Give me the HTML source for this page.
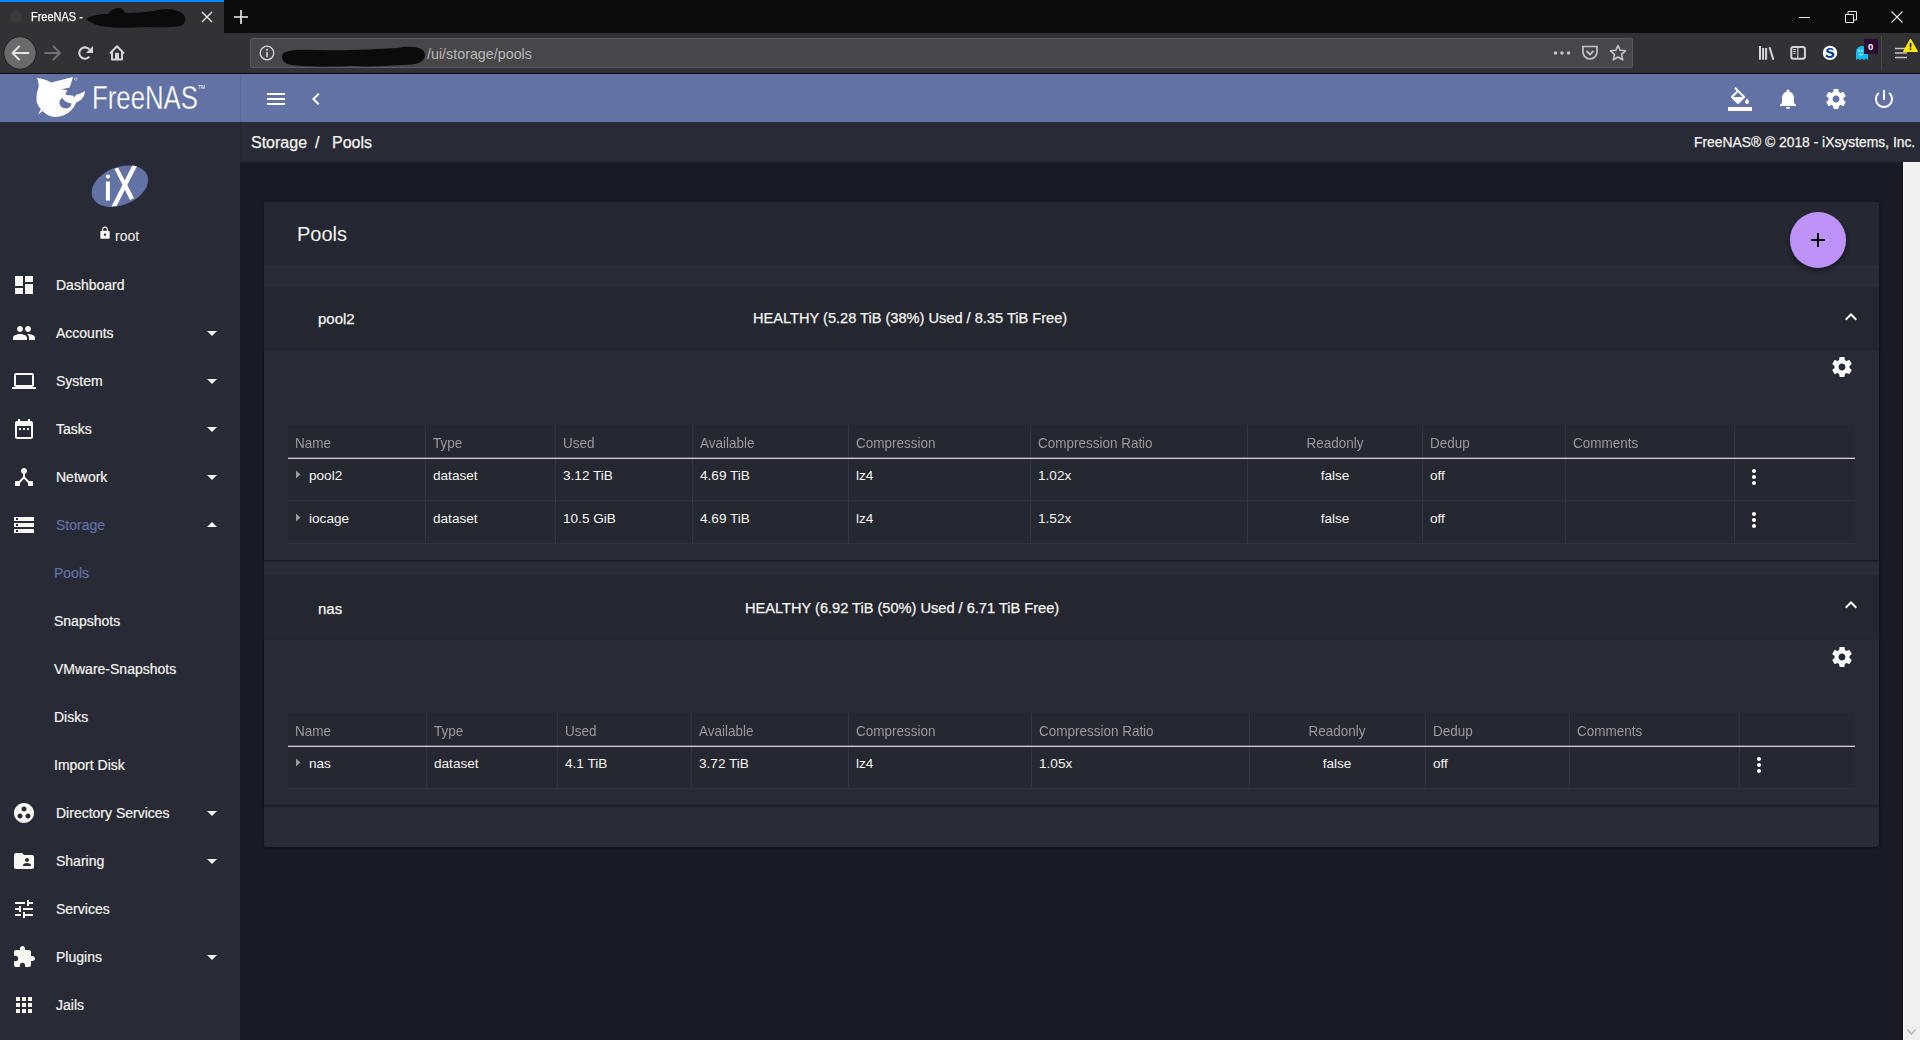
<!DOCTYPE html>
<html><head><meta charset="utf-8">
<style>
*{box-sizing:border-box;margin:0;padding:0}
html,body{width:1920px;height:1040px;overflow:hidden;background:#181a26;font-family:"Liberation Sans",sans-serif;color:#f5f5f0}
.a{position:absolute}
svg{display:block}
.t{position:absolute;white-space:nowrap;line-height:1}
#tabs{left:0;top:0;width:1920px;height:33px;background:#0c0c0d}
#tab{left:0;top:0;width:224px;height:33px;background:#323234}
#tabline{left:0;top:0;width:224px;height:2px;background:#0a84ff}
#nav{left:0;top:33px;width:1920px;height:40px;background:#323234}
#navline{left:0;top:73px;width:1920px;height:1px;background:#0c0c0d}
#url{left:250px;top:38px;width:1383px;height:30px;background:#474749;border:1px solid #5b5b5d;border-radius:2px}
#topbar{left:0;top:74px;width:1920px;height:48px;background:#6272a4}
#side{left:0;top:122px;width:240px;height:918px;background:#282a36}
#crumb{left:240px;top:122px;width:1680px;height:40px;background:#282a36}
#scroll{left:1903px;top:162px;width:17px;height:878px;background:#f0f0f0;border-left:1px solid #fff}
.nav-t{position:absolute;left:56px;font-size:14px;line-height:1;white-space:nowrap;color:#f5f5f0;-webkit-text-stroke:0.2px #f5f5f0}
.sub-t{position:absolute;left:54px;font-size:14px;line-height:1;white-space:nowrap;color:#f5f5f0;-webkit-text-stroke:0.2px #f5f5f0}
#card{left:264px;top:202px;width:1615px;height:645px;background:#292b37;border-radius:2px;box-shadow:0 1px 3px rgba(0,0,0,.5)}
.th{position:absolute;font-size:14.2px;color:#9b9b9b;white-space:nowrap;line-height:1;transform:scaleX(0.95);transform-origin:0 0}
.td{position:absolute;font-size:13.6px;color:#f5f5f0;white-space:nowrap;line-height:1}
.vl{position:absolute;width:1px;background:#32343f}
.md{-webkit-text-stroke:0.25px #f5f5f0}
</style></head><body>
<div id="tabs" class="a"></div>
<div id="tab" class="a"></div>
<div id="tabline" class="a"></div>
<div id="nav" class="a"></div>
<div id="navline" class="a"></div>
<div id="url" class="a"></div>
<!-- tab -->
<svg class="a" style="left:9px;top:10px" width="14" height="14" viewBox="0 0 14 14"><circle cx="7" cy="7" r="6" fill="#3a3a3c"/></svg>
<div class="t" style="left:31px;top:11px;font-size:12.2px;color:#f9f9fa;transform:scaleX(0.9);transform-origin:0 0;-webkit-text-stroke:0.25px #f9f9fa">FreeNAS -</div>
<svg class="a" style="left:84px;top:6px" width="104" height="24" viewBox="0 0 104 24"><path d="M2 13 C6 10 14 8 24 8 C27 4 30 2 34 2 C38 2 40 4 41 7 C50 7 60 6 70 5 C80 2 92 2 99 8 C103 12 102 18 96 20 C85 22 72 21 60 21 C48 22 36 22 24 21 C14 20 6 17 2 13 Z" fill="#0b0b0c"/></svg>
<svg class="a" style="left:200px;top:10px" width="14" height="14" viewBox="0 0 14 14"><path d="M2 2L12 12M12 2L2 12" stroke="#e8e8ea" stroke-width="1.4"/></svg>
<svg class="a" style="left:233px;top:9px" width="16" height="16" viewBox="0 0 16 16"><path d="M8 1V15M1 8H15" stroke="#f0f0f2" stroke-width="1.6"/></svg>
<!-- window controls -->
<svg class="a" style="left:1799px;top:11px" width="12" height="12" viewBox="0 0 12 12"><path d="M0 6.5H11" stroke="#e8e8e8" stroke-width="1"/></svg>
<svg class="a" style="left:1845px;top:11px" width="12" height="12" viewBox="0 0 12 12"><path d="M0.5 3.5H8.5V11.5H0.5Z M3 3.5V0.5H11.5V9H8.5" fill="none" stroke="#e8e8e8" stroke-width="1"/></svg>
<svg class="a" style="left:1891px;top:11px" width="12" height="12" viewBox="0 0 12 12"><path d="M0.5 0.5L11.5 11.5M11.5 0.5L0.5 11.5" stroke="#e8e8e8" stroke-width="1.1"/></svg>
<!-- nav buttons -->
<svg class="a" style="left:3px;top:36px" width="34" height="34" viewBox="0 0 34 34"><circle cx="17" cy="17" r="16.2" fill="#6a6a6a" stroke="#222" stroke-width="1.1"/><path d="M9.5 17H25.5M9.5 17L16 10.5M9.5 17L16 23.5" stroke="#e4e4e4" stroke-width="1.9" fill="none" stroke-linecap="round"/></svg>
<svg class="a" style="left:44px;top:45px" width="18" height="16" viewBox="0 0 18 16"><path d="M1 8H16M16 8L9.5 1.5M16 8L9.5 14.5" stroke="#727274" stroke-width="1.9" fill="none" stroke-linecap="round"/></svg>
<svg class="a" style="left:74px;top:40px" width="56" height="26" viewBox="74 40 56 26"><path d="M89.3 56.7 A5.7 5.7 0 1 1 89.57 49.73" stroke="#d6d6d8" stroke-width="2.1" fill="none"/><path d="M86 52.9 L93 52.9 L93 45.9 Z" fill="#d6d6d8"/><path d="M110 53.5 L117 46.3 L124 53.5 M112 52 V59.6 H122 V52" stroke="#d6d6d8" stroke-width="2" fill="none" stroke-linejoin="round"/><rect x="115" y="52.8" width="4" height="6.5" fill="#d6d6d8"/></svg>
<!-- url -->
<svg class="a" style="left:259px;top:45px" width="16" height="16" viewBox="0 0 16 16"><circle cx="8" cy="8" r="6.8" stroke="#d8d8da" stroke-width="1.3" fill="none"/><rect x="7.2" y="7" width="1.6" height="5" fill="#d8d8da"/><circle cx="8" cy="4.8" r="1" fill="#d8d8da"/></svg>
<svg class="a" style="left:277px;top:44px" width="152" height="24" viewBox="0 0 152 24"><path d="M5 12 C5 6 20 5 40 6 C70 7 100 5 120 4 C135 1 148 3 148 11 C148 18 140 21 125 21 C105 22 95 23 75 22 C55 23 30 23 15 21 C8 20 5 17 5 12 Z" fill="#0b0b0c"/></svg>
<div class="t" style="left:427px;top:47px;font-size:14.3px;color:#b8b8ba">/ui/storage/pools</div>
<svg class="a" style="left:1553px;top:49px" width="18" height="8" viewBox="0 0 18 8"><circle cx="2.5" cy="4" r="1.8" fill="#c4c4c6"/><circle cx="9" cy="4" r="1.8" fill="#c4c4c6"/><circle cx="15.5" cy="4" r="1.8" fill="#c4c4c6"/></svg>
<svg class="a" style="left:1581px;top:45px" width="18" height="16" viewBox="0 0 18 16"><path d="M2 1.5H16V7A7 7 0 0 1 2 7Z" stroke="#c4c4c6" stroke-width="1.7" fill="none"/><path d="M5.5 6L9 9.5L12.5 6" stroke="#c4c4c6" stroke-width="1.8" fill="none"/></svg>
<svg class="a" style="left:1609px;top:44px" width="18" height="18" viewBox="0 0 18 18"><path d="M9 1.5L11.2 6.3L16.5 6.8L12.5 10.4L13.7 15.8L9 13L4.3 15.8L5.5 10.4L1.5 6.8L6.8 6.3Z" stroke="#c4c4c6" stroke-width="1.6" fill="none" stroke-linejoin="round"/></svg>
<!-- toolbar right -->
<svg class="a" style="left:1750px;top:38px" width="95" height="30" viewBox="1750 38 95 30"><path d="M1760 45.9V59.8M1763.1 47.9V59.8M1766.1 47.9V59.8M1769.5 47.2L1773.4 59.8" stroke="#d6d6d6" stroke-width="2" fill="none"/><rect x="1791.3" y="46.9" width="13.6" height="11.9" rx="2" stroke="#d6d6d6" stroke-width="2" fill="none"/><path d="M1797.8 46.9V58.8M1793.2 49.5H1795.8M1793.2 51.5H1795.8M1793.5 53.5H1795.5" stroke="#d6d6d6" stroke-width="1.1" fill="none"/><circle cx="1830" cy="52.9" r="7.2" fill="#fff"/><path d="M1833.6 49.6C1832.6 48.4 1831.3 48 1829.8 48C1827.7 48 1826.2 49.1 1826.2 50.8C1826.2 52.6 1828 53.1 1829.8 53.5C1831.2 53.8 1831.9 54.1 1831.9 54.8C1831.9 55.5 1831.1 55.9 1830 55.9C1828.6 55.9 1827.5 55.3 1826.6 54.4L1825.3 56.3C1826.5 57.5 1828.1 58 1829.9 58C1832.6 58 1834.4 56.7 1834.4 54.6C1834.4 52.6 1832.6 52 1830.7 51.6C1829.5 51.3 1828.7 51.1 1828.7 50.4C1828.7 49.8 1829.3 49.5 1830 49.5C1831 49.5 1831.8 49.9 1832.4 50.6Z" fill="#0a3d9e"/></svg>
<svg class="a" style="left:1855px;top:45px" width="14" height="16" viewBox="0 0 14 16"><path d="M1 15V7A6 6 0 0 1 13 7V15L11 13.5L9 15L7 13.5L5 15L3 13.5Z" fill="#12bdf5"/><rect x="3.5" y="4.5" width="1.2" height="2.5" rx="0.6" fill="#e8f8ff"/><rect x="6.2" y="4.5" width="1.2" height="2.5" rx="0.6" fill="#e8f8ff"/><path d="M4 9Q6 11 8 9" stroke="#e8f8ff" stroke-width="0.9" fill="none"/></svg>
<div class="a" style="left:1864px;top:39px;width:14px;height:15px;background:#2b0a35"></div>
<div class="t" style="left:1868px;top:42px;font-size:9.5px;font-weight:700;color:#fff">0</div>
<div class="a" style="left:1881px;top:36px;width:1px;height:34px;background:#4a4a4c"></div>
<svg class="a" style="left:1894px;top:46px" width="14" height="14" viewBox="0 0 14 14"><path d="M1 2.5H13M1 7H13M1 11.5H13" stroke="#c4c4c6" stroke-width="1.6"/></svg>
<svg class="a" style="left:1903px;top:38px" width="15" height="14" viewBox="0 0 15 14"><path d="M7.5 1L14.5 13.5H0.5Z" fill="#ffe900" stroke="#ffe900" stroke-linejoin="round"/><rect x="6.8" y="5" width="1.5" height="4.5" fill="#000"/><rect x="6.8" y="10.5" width="1.5" height="1.5" fill="#000"/></svg>

<div id="topbar" class="a"></div>
<div class="a" style="left:240px;top:74px;width:1px;height:48px;background:#5a6898"></div>
<svg class="a" style="left:30px;top:74px" width="60" height="48" viewBox="0 0 60 48"><path fill="#fff" fill-rule="evenodd" d="M6.7,3.9 C12,4 17,6 21.2,8.5 L42.9,3.0 C41.5,8 40.5,11 39.7,13.4 L31.4,15.2 L37.4,16.2 L35.1,20.3 C38,21.5 41,21.5 43.4,21.7 L44.3,23.5 L46.1,20.8 C50,20 53,18.5 54.9,17.1 C55,23 51,27 46.1,28.6 C43,37 35,43 25.8,42.9 C20,43 16,40 12.5,36.9 L8.1,40.8 L10.8,35.3 C7,31 6,27 6.5,23.1 C6.8,17 9,13 8.8,11.5 C8.6,8 7.8,5.5 6.7,3.9 Z M32.3,24 C34,27 37,29 41.5,29.5 C41,32.5 39.5,34 36,34.5 C32,34.5 29.5,32 29.5,28.6 C29.5,26.5 30.5,25 32.3,24 Z"/><circle cx="45.8" cy="5" r="1.3" fill="none" stroke="#dfe3ee" stroke-width="0.6"/></svg>
<svg class="a" style="left:90px;top:80px" width="115" height="36" viewBox="0 0 115 36"><text x="2" y="28.6" font-family="Liberation Sans" font-size="30.5" textLength="106" lengthAdjust="spacingAndGlyphs" fill="#fff" stroke="#6272a4" stroke-width="0.3" transform="translate(0 -2.3) scale(1 1.08)">FreeNAS</text><text x="108" y="9" font-family="Liberation Sans" font-size="5" fill="#fff">TM</text></svg>

<svg class="a" style="left:264px;top:87px" width="24" height="24" viewBox="0 0 24 24"><path d="M3 18h18v-2H3v2zm0-5h18v-2H3v2zm0-7v2h18V6H3z" fill="#fff"/></svg>
<svg class="a" style="left:304px;top:87px" width="24" height="24" viewBox="0 0 24 24"><path d="M15.41 7.41L14 6l-6 6 6 6 1.41-1.41L10.83 12z" fill="#fff"/></svg>
<svg class="a" style="left:1728px;top:87px" width="24" height="24" viewBox="0 0 24 24"><path d="M16.56 8.94L7.62 0 6.21 1.41l2.38 2.38-5.15 5.15c-.59.59-.59 1.54 0 2.12l5.5 5.5c.29.29.68.44 1.06.44s.77-.15 1.06-.44l5.5-5.5c.59-.58.59-1.53 0-2.12zM5.21 10L10 5.21 14.79 10H5.21zM19 11.5s-2 2.17-2 3.5c0 1.1.9 2 2 2s2-.9 2-2c0-1.33-2-3.5-2-3.5zM0 20h24v4H0z" fill="#fff"/></svg>
<svg class="a" style="left:1776px;top:87px" width="24" height="24" viewBox="0 0 24 24"><path d="M12 22c1.1 0 2-.9 2-2h-4c0 1.1.89 2 2 2zm6-6v-5c0-3.07-1.64-5.64-4.5-6.32V4c0-.83-.67-1.5-1.5-1.5s-1.5.67-1.5 1.5v.68C7.63 5.36 6 7.92 6 11v5l-2 2v1h16v-1l-2-2z" fill="#fff"/></svg>
<svg class="a" style="left:1824px;top:87px" width="24" height="24" viewBox="0 0 24 24"><path d="M19.43 12.98c.04-.32.07-.64.07-.98s-.03-.66-.07-.98l2.11-1.65c.19-.15.24-.42.12-.64l-2-3.46c-.12-.22-.39-.3-.61-.22l-2.49 1c-.52-.4-1.08-.73-1.690-.98l-.38-2.65C14.46 2.18 14.25 2 14 2h-4c-.25 0-.46.18-.49.42l-.38 2.65c-.61.25-1.17.59-1.69.98l-2.49-1c-.23-.09-.49 0-.61.22l-2 3.46c-.13.22-.07.49.12.64l2.11 1.65c-.04.32-.07.65-.07.98s.03.66.07.98l-2.11 1.65c-.19.15-.24.42-.12.64l2 3.46c.12.22.39.3.61.22l2.49-1c.52.4 1.08.73 1.69.98l.38 2.65c.03.24.24.42.49.42h4c.25 0 .46-.18.49-.42l.38-2.65c.61-.25 1.17-.59 1.69-.98l2.49 1c.23.09.49 0 .61-.22l2-3.46c.12-.22.07-.49-.12-.64l-2.11-1.65zM12 15.5c-1.93 0-3.5-1.57-3.5-3.5s1.57-3.5 3.5-3.5 3.5 1.57 3.5 3.5-1.57 3.5-3.5 3.5z" fill="#fff"/></svg>
<svg class="a" style="left:1872px;top:87px" width="24" height="24" viewBox="0 0 24 24"><path d="M13 3h-2v10h2V3zm4.83 2.17l-1.42 1.42C17.99 7.86 19 9.81 19 12c0 3.87-3.130 7-7 7s-7-3.13-7-7c0-2.19 1.01-4.14 2.58-5.42L6.17 5.17C4.23 6.82 3 9.26 3 12c0 4.97 4.03 9 9 9s9-4.03 9-9c0-2.74-1.23-5.18-3.17-6.83z" fill="#fff"/></svg>

<div id="side" class="a"></div>
<svg class="a" style="left:85px;top:155px" width="70" height="60" viewBox="0 0 70 60"><ellipse cx="34.9" cy="31.2" rx="29.5" ry="19" transform="rotate(-22 34.9 31.2)" fill="#6272a4"/><rect x="20.9" y="26.5" width="4" height="19.1" fill="#fff"/><circle cx="22.9" cy="21.6" r="2.1" fill="#fff"/><path d="M29.4,13.8 L33.2,12.7 L49,43 L45,45 Z M47.3,10.4 L51.9,11.3 L31.7,50.8 L26.5,51.4 Z" fill="#fff"/></svg>

<svg class="a" style="left:98px;top:226px" width="14" height="14" viewBox="0 0 24 24"><path d="M18 8h-1V6c0-2.76-2.24-5-5-5S7 3.24 7 6v2H6c-1.1 0-2 .9-2 2v10c0 1.1.9 2 2 2h12c1.1 0 2-.9 2-2V10c0-1.1-.9-2-2-2zm-6 9c-1.1 0-2-.9-2-2s.9-2 2-2 2 .9 2 2-.9 2-2 2zm3.1-9H8.9V6c0-1.71 1.39-3.1 3.1-3.1 1.71 0 3.1 1.39 3.1 3.1v2z" fill="#f8f8f2"/></svg>

<div class="t" style="left:115px;top:229px;font-size:14px;color:#f5f5f0">root</div>
<svg class="a" style="left:12px;top:273px" width="24" height="24" viewBox="0 0 24 24"><path d="M3 13h8V3H3v10zm0 8h8v-6H3v6zm10 0h8V11h-8v10zm0-18v6h8V3h-8z" fill="#f8f8f2"/></svg>

<div class="nav-t" style="top:278px;color:#f5f5f0;-webkit-text-stroke:0.2px #f5f5f0">Dashboard</div>
<svg class="a" style="left:12px;top:321px" width="24" height="24" viewBox="0 0 24 24"><path d="M16 11c1.66 0 2.99-1.34 2.99-3S17.66 5 16 5c-1.66 0-3 1.34-3 3s1.34 3 3 3zm-8 0c1.66 0 2.99-1.34 2.99-3S9.66 5 8 5C6.34 5 5 6.34 5 8s1.34 3 3 3zm0 2c-2.330 0-7 1.170-7 3.5V19h14v-2.5c0-2.33-4.67-3.5-7-3.5zm8 0c-.29 0-.62.02-.97.05 1.16.84 1.97 1.97 1.97 3.45V19h6v-2.5c0-2.33-4.67-3.5-7-3.5z" fill="#f8f8f2"/></svg>

<div class="nav-t" style="top:326px;color:#f5f5f0;-webkit-text-stroke:0.2px #f5f5f0">Accounts</div>
<svg class="a" style="left:200px;top:321px" width="24" height="24" viewBox="0 0 24 24"><path d="M7 10l5 5 5-5z" fill="#f5f5f0"/></svg>
<svg class="a" style="left:12px;top:369px" width="24" height="24" viewBox="0 0 24 24"><path d="M20 18c1.1 0 1.99-.9 1.99-2L22 6c0-1.1-.9-2-2-2H4c-1.1 0-2 .9-2 2v10c0 1.1.9 2 2 2H0v2h24v-2h-4zM4 6h16v10H4V6z" fill="#f8f8f2"/></svg>

<div class="nav-t" style="top:374px;color:#f5f5f0;-webkit-text-stroke:0.2px #f5f5f0">System</div>
<svg class="a" style="left:200px;top:369px" width="24" height="24" viewBox="0 0 24 24"><path d="M7 10l5 5 5-5z" fill="#f5f5f0"/></svg>
<svg class="a" style="left:12px;top:417px" width="24" height="24" viewBox="0 0 24 24"><path d="M9 11H7v2h2v-2zm4 0h-2v2h2v-2zm4 0h-2v2h2v-2zm2-7h-1V2h-2v2H8V2H6v2H5c-1.11 0-1.99.9-1.99 2L3 20c0 1.1.89 2 2 2h14c1.1 0 2-.9 2-2V6c0-1.1-.9-2-2-2zm0 16H5V9h14v11z" fill="#f8f8f2"/></svg>

<div class="nav-t" style="top:422px;color:#f5f5f0;-webkit-text-stroke:0.2px #f5f5f0">Tasks</div>
<svg class="a" style="left:200px;top:417px" width="24" height="24" viewBox="0 0 24 24"><path d="M7 10l5 5 5-5z" fill="#f5f5f0"/></svg>
<svg class="a" style="left:12px;top:465px" width="24" height="24" viewBox="0 0 24 24"><path d="M17 16l-4-4V8.82C14.16 8.4 15 7.3 15 6c0-1.66-1.34-3-3-3S9 4.34 9 6c0 1.3.84 2.4 2 2.82V12l-4 4H3v5h5v-3.05l4-4.2 4 4.2V21h5v-5h-4z" fill="#f8f8f2"/></svg>

<div class="nav-t" style="top:470px;color:#f5f5f0;-webkit-text-stroke:0.2px #f5f5f0">Network</div>
<svg class="a" style="left:200px;top:465px" width="24" height="24" viewBox="0 0 24 24"><path d="M7 10l5 5 5-5z" fill="#f5f5f0"/></svg>
<svg class="a" style="left:12px;top:513px" width="24" height="24" viewBox="0 0 24 24"><path d="M2 20h20v-4H2v4zm2-3h2v2H4v-2zM2 4v4h20V4H2zm4 3H4V5h2v2zm-4 7h20v-4H2v4zm2-3h2v2H4v-2z" fill="#f8f8f2"/></svg>

<div class="nav-t" style="top:518px;color:#6272a4;-webkit-text-stroke:0.2px #6272a4">Storage</div>
<svg class="a" style="left:200px;top:513px" width="24" height="24" viewBox="0 0 24 24"><path d="M7 14l5-5 5 5z" fill="#f5f5f0"/></svg>
<div class="sub-t" style="top:566px;color:#6272a4;-webkit-text-stroke:0.2px #6272a4">Pools</div>
<div class="sub-t" style="top:614px;color:#f5f5f0;-webkit-text-stroke:0.2px #f5f5f0">Snapshots</div>
<div class="sub-t" style="top:662px;color:#f5f5f0;-webkit-text-stroke:0.2px #f5f5f0">VMware-Snapshots</div>
<div class="sub-t" style="top:710px;color:#f5f5f0;-webkit-text-stroke:0.2px #f5f5f0">Disks</div>
<div class="sub-t" style="top:758px;color:#f5f5f0;-webkit-text-stroke:0.2px #f5f5f0">Import Disk</div>
<svg class="a" style="left:12px;top:801px" width="24" height="24" viewBox="0 0 24 24"><path d="M12 2C6.48 2 2 6.48 2 12s4.48 10 10 10 10-4.48 10-10S17.52 2 12 2zM8 17.5c-1.38 0-2.5-1.12-2.5-2.5s1.12-2.5 2.5-2.5 2.5 1.12 2.5 2.5-1.12 2.5-2.5 2.5zM9.5 8c0-1.38 1.12-2.5 2.5-2.5s2.5 1.12 2.5 2.5-1.12 2.5-2.5 2.5S9.5 9.38 9.5 8zm6.5 9.5c-1.38 0-2.5-1.12-2.5-2.5s1.12-2.5 2.5-2.5 2.5 1.12 2.5 2.5-1.12 2.5-2.5 2.5z" fill="#f8f8f2"/></svg>

<div class="nav-t" style="top:806px">Directory Services</div>
<svg class="a" style="left:200px;top:801px" width="24" height="24" viewBox="0 0 24 24"><path d="M7 10l5 5 5-5z" fill="#f5f5f0"/></svg>
<svg class="a" style="left:12px;top:849px" width="24" height="24" viewBox="0 0 24 24"><path d="M20 6h-8l-2-2H4c-1.1 0-1.99.9-1.99 2L2 18c0 1.1.9 2 2 2h16c1.1 0 2-.9 2-2V8c0-1.1-.9-2-2-2zm-5 3c1.1 0 2 .9 2 2s-.9 2-2 2-2-.9-2-2 .9-2 2-2zm4 8h-8v-1c0-1.33 2.67-2 4-2s4 .67 4 2v1z" fill="#f8f8f2"/></svg>

<div class="nav-t" style="top:854px">Sharing</div>
<svg class="a" style="left:200px;top:849px" width="24" height="24" viewBox="0 0 24 24"><path d="M7 10l5 5 5-5z" fill="#f5f5f0"/></svg>
<svg class="a" style="left:12px;top:897px" width="24" height="24" viewBox="0 0 24 24"><path d="M3 17v2h6v-2H3zM3 5v2h10V5H3zm10 16v-2h8v-2h-8v-2h-2v6h2zM7 9v2H3v2h4v2h2V9H7zm14 4v-2H11v2h10zm-6-4h2V7h4V5h-4V3h-2v6z" fill="#f8f8f2"/></svg>

<div class="nav-t" style="top:902px">Services</div>
<svg class="a" style="left:12px;top:945px" width="24" height="24" viewBox="0 0 24 24"><path d="M20.5 11H19V7c0-1.1-.9-2-2-2h-4V3.5C13 2.12 11.88 1 10.5 1S8 2.12 8 3.5V5H4c-1.1 0-1.99.9-1.99 2v3.8H3.5c1.49 0 2.7 1.21 2.7 2.7s-1.21 2.7-2.7 2.7H2V20c0 1.1.9 2 2 2h3.8v-1.5c0-1.49 1.21-2.7 2.7-2.7 1.49 0 2.7 1.21 2.7 2.7V22H17c1.1 0 2-.9 2-2v-4h1.5c1.38 0 2.5-1.12 2.5-2.5S21.88 11 20.5 11z" fill="#f8f8f2"/></svg>

<div class="nav-t" style="top:950px">Plugins</div>
<svg class="a" style="left:200px;top:945px" width="24" height="24" viewBox="0 0 24 24"><path d="M7 10l5 5 5-5z" fill="#f5f5f0"/></svg>
<svg class="a" style="left:12px;top:993px" width="24" height="24" viewBox="0 0 24 24"><path d="M4 8h4V4H4v4zm6 12h4v-4h-4v4zm-6 0h4v-4H4v4zm0-6h4v-4H4v4zm6 0h4v-4h-4v4zm6-10v4h4V4h-4zm-6 4h4V4h-4v4zm6 6h4v-4h-4v4zm0 6h4v-4h-4v4z" fill="#f8f8f2"/></svg>

<div class="nav-t" style="top:998px">Jails</div>
<div id="crumb" class="a"></div>
<div class="a" style="left:240px;top:122px;width:1px;height:40px;background:#252731"></div>
<div class="t md" style="left:251px;top:135px;font-size:16px">Storage</div>
<div class="t md" style="left:315px;top:135px;font-size:16px">/</div>
<div class="t md" style="left:332px;top:135px;font-size:16px">Pools</div>
<div class="t md" style="left:1694px;top:136px;font-size:13.85px">FreeNAS® © 2018 - iXsystems, Inc.</div>
<div id="scroll" class="a"></div>
<div class="a" style="left:1902px;top:162px;width:1px;height:878px;background:#0c0d14"></div>
<svg class="a" style="left:1907px;top:1028px" width="9" height="8" viewBox="0 0 9 8"><path d="M0.5 1.5L4.5 6L8.5 1.5" stroke="#bababa" stroke-width="1.6" fill="none"/></svg>
<div id="card" class="a"></div>
<div class="a" style="left:264px;top:202px;width:1615px;height:63px;background:#252832;border-radius:2px 2px 0 0"></div>
<div class="t" style="left:297px;top:224px;font-size:20px">Pools</div>
<svg class="a" style="left:1786px;top:208px;overflow:visible" width="64" height="64" viewBox="0 0 64 64"><defs><filter id="sh" x="-30%" y="-30%" width="160%" height="160%"><feDropShadow dx="0" dy="3" stdDeviation="3" flood-color="#000" flood-opacity="0.45"/></filter></defs><circle cx="32" cy="32" r="28" fill="#bd93f9" filter="url(#sh)"/><path d="M31 25H33V31H39V33H33V39H31V33H25V31H31Z" fill="#000"/></svg>
<div class="a" style="left:264px;top:287px;width:1615px;height:63px;background:#242630"></div>
<div class="t md" style="left:318px;top:311px;font-size:15px">pool2</div>
<div class="t md" style="left:753px;top:311px;font-size:14.6px">HEALTHY (5.28 TiB (38%) Used / 8.35 TiB Free)</div>
<svg class="a" style="left:1839px;top:305px" width="24" height="24" viewBox="0 0 24 24"><path d="M12 8l-6 6 1.41 1.41L12 10.83l4.59 4.58L18 14z" fill="#fff"/></svg>

<div class="a" style="left:264px;top:350px;width:1615px;height:210px;background:#282a36;box-shadow:0 1px 2px rgba(0,0,0,.5)"></div>
<svg class="a" style="left:1830px;top:355px" width="24" height="24" viewBox="0 0 24 24"><path d="M19.43 12.98c.04-.32.07-.64.07-.98s-.03-.66-.07-.98l2.11-1.65c.19-.15.24-.42.12-.64l-2-3.46c-.12-.22-.39-.3-.61-.22l-2.49 1c-.52-.4-1.08-.73-1.690-.98l-.38-2.65C14.46 2.18 14.25 2 14 2h-4c-.25 0-.46.18-.49.42l-.38 2.65c-.61.25-1.17.59-1.69.98l-2.49-1c-.23-.09-.49 0-.61.22l-2 3.46c-.13.22-.07.49.12.64l2.11 1.65c-.04.32-.07.65-.07.98s.03.66.07.98l-2.11 1.65c-.19.15-.24.42-.12.64l2 3.46c.12.22.39.3.61.22l2.49-1c.52.4 1.08.73 1.69.98l.38 2.65c.03.24.24.42.49.42h4c.25 0 .46-.18.49-.42l.38-2.65c.61-.25 1.17-.59 1.69-.98l2.49 1c.23.09.49 0 .61-.22l2-3.46c.12-.22.07-.49-.12-.64l-2.11-1.65zM12 15.5c-1.93 0-3.5-1.57-3.5-3.5s1.57-3.5 3.5-3.5 3.5 1.57 3.5 3.5-1.57 3.5-3.5 3.5z" fill="#fff"/></svg>

<div class="a" style="left:288px;top:425px;width:1567px;height:118px;background:#252731"></div>
<div class="vl" style="left:425px;top:425px;height:118px"></div>
<div class="vl" style="left:555px;top:425px;height:118px"></div>
<div class="vl" style="left:692px;top:425px;height:118px"></div>
<div class="vl" style="left:848px;top:425px;height:118px"></div>
<div class="vl" style="left:1030px;top:425px;height:118px"></div>
<div class="vl" style="left:1247px;top:425px;height:118px"></div>
<div class="vl" style="left:1422px;top:425px;height:118px"></div>
<div class="vl" style="left:1565px;top:425px;height:118px"></div>
<div class="vl" style="left:1734px;top:425px;height:118px"></div>
<div class="a" style="left:288px;top:543px;width:1567px;height:1px;background:#31333e"></div>
<div class="a" style="left:288px;top:500px;width:1567px;height:1px;background:#2e303b"></div>
<div class="a" style="left:288px;top:458px;width:1567px;height:1px;background:#d4d4d4"></div>
<div class="a" style="left:288px;top:457px;width:1567px;height:1px;background:#5c5d65"></div>
<div class="th" style="left:295px;top:436px">Name</div>
<div class="th" style="left:433px;top:436px">Type</div>
<div class="th" style="left:563px;top:436px">Used</div>
<div class="th" style="left:700px;top:436px">Available</div>
<div class="th" style="left:856px;top:436px">Compression</div>
<div class="th" style="left:1038px;top:436px">Compression Ratio</div>
<div class="th" style="left:1275px;width:120px;text-align:center;top:436px;transform-origin:50% 0">Readonly</div>
<div class="th" style="left:1430px;top:436px">Dedup</div>
<div class="th" style="left:1573px;top:436px">Comments</div>
<svg class="a" style="left:295px;top:469px" width="8" height="11" viewBox="0 0 8 11"><path d="M1 1.5L5.5 5.5L1 9.5Z" fill="#9a9a9a"/></svg>
<div class="td" style="left:309px;top:469px">pool2</div>
<div class="td" style="left:433px;top:469px">dataset</div>
<div class="td" style="left:563px;top:469px">3.12 TiB</div>
<div class="td" style="left:700px;top:469px">4.69 TiB</div>
<div class="td" style="left:856px;top:469px">lz4</div>
<div class="td" style="left:1038px;top:469px">1.02x</div>
<div class="td" style="left:1275px;width:120px;text-align:center;top:469px">false</div>
<div class="td" style="left:1430px;top:469px">off</div>
<div class="td" style="left:1573px;top:469px"></div>
<svg class="a" style="left:1742px;top:465px" width="24" height="24" viewBox="0 0 24 24"><path d="M12 8c1.1 0 2-.9 2-2s-.9-2-2-2-2 .9-2 2 .9 2 2 2zm0 2c-1.1 0-2 .9-2 2s.9 2 2 2 2-.9 2-2-.9-2-2-2zm0 6c-1.1 0-2 .9-2 2s.9 2 2 2 2-.9 2-2-.9-2-2-2z" fill="#fff"/></svg>

<svg class="a" style="left:295px;top:512px" width="8" height="11" viewBox="0 0 8 11"><path d="M1 1.5L5.5 5.5L1 9.5Z" fill="#9a9a9a"/></svg>
<div class="td" style="left:309px;top:512px">iocage</div>
<div class="td" style="left:433px;top:512px">dataset</div>
<div class="td" style="left:563px;top:512px">10.5 GiB</div>
<div class="td" style="left:700px;top:512px">4.69 TiB</div>
<div class="td" style="left:856px;top:512px">lz4</div>
<div class="td" style="left:1038px;top:512px">1.52x</div>
<div class="td" style="left:1275px;width:120px;text-align:center;top:512px">false</div>
<div class="td" style="left:1430px;top:512px">off</div>
<div class="td" style="left:1573px;top:512px"></div>
<svg class="a" style="left:1742px;top:508px" width="24" height="24" viewBox="0 0 24 24"><path d="M12 8c1.1 0 2-.9 2-2s-.9-2-2-2-2 .9-2 2 .9 2 2 2zm0 2c-1.1 0-2 .9-2 2s.9 2 2 2 2-.9 2-2-.9-2-2-2zm0 6c-1.1 0-2 .9-2 2s.9 2 2 2 2-.9 2-2-.9-2-2-2z" fill="#fff"/></svg>

<div class="a" style="left:264px;top:575px;width:1615px;height:65px;background:#242630"></div>
<div class="t md" style="left:318px;top:601px;font-size:15px">nas</div>
<div class="t md" style="left:745px;top:601px;font-size:14.6px">HEALTHY (6.92 TiB (50%) Used / 6.71 TiB Free)</div>
<svg class="a" style="left:1839px;top:593px" width="24" height="24" viewBox="0 0 24 24"><path d="M12 8l-6 6 1.41 1.41L12 10.83l4.59 4.58L18 14z" fill="#fff"/></svg>

<div class="a" style="left:264px;top:640px;width:1615px;height:165px;background:#282a36;box-shadow:0 1px 2px rgba(0,0,0,.5)"></div>
<svg class="a" style="left:1830px;top:645px" width="24" height="24" viewBox="0 0 24 24"><path d="M19.43 12.98c.04-.32.07-.64.07-.98s-.03-.66-.07-.98l2.11-1.65c.19-.15.24-.42.12-.64l-2-3.46c-.12-.22-.39-.3-.61-.22l-2.49 1c-.52-.4-1.08-.73-1.690-.98l-.38-2.65C14.46 2.18 14.25 2 14 2h-4c-.25 0-.46.18-.49.42l-.38 2.65c-.61.25-1.17.59-1.69.98l-2.49-1c-.23-.09-.49 0-.61.22l-2 3.46c-.13.22-.07.49.12.64l2.11 1.65c-.04.32-.07.65-.07.98s.03.66.07.98l-2.11 1.65c-.19.15-.24.42-.12.64l2 3.46c.12.22.39.3.61.22l2.49-1c.52.4 1.08.73 1.69.98l.38 2.65c.03.24.24.42.49.42h4c.25 0 .46-.18.49-.42l.38-2.65c.61-.25 1.17-.59 1.69-.98l2.49 1c.23.09.49 0 .61-.22l2-3.46c.12-.22.07-.49-.12-.64l-2.11-1.65zM12 15.5c-1.93 0-3.5-1.57-3.5-3.5s1.57-3.5 3.5-3.5 3.5 1.57 3.5 3.5-1.57 3.5-3.5 3.5z" fill="#fff"/></svg>

<div class="a" style="left:288px;top:713px;width:1567px;height:75px;background:#252731"></div>
<div class="vl" style="left:426px;top:713px;height:75px"></div>
<div class="vl" style="left:557px;top:713px;height:75px"></div>
<div class="vl" style="left:691px;top:713px;height:75px"></div>
<div class="vl" style="left:848px;top:713px;height:75px"></div>
<div class="vl" style="left:1031px;top:713px;height:75px"></div>
<div class="vl" style="left:1249px;top:713px;height:75px"></div>
<div class="vl" style="left:1425px;top:713px;height:75px"></div>
<div class="vl" style="left:1569px;top:713px;height:75px"></div>
<div class="vl" style="left:1739px;top:713px;height:75px"></div>
<div class="a" style="left:288px;top:788px;width:1567px;height:1px;background:#31333e"></div>
<div class="a" style="left:288px;top:746px;width:1567px;height:1px;background:#d4d4d4"></div>
<div class="a" style="left:288px;top:745px;width:1567px;height:1px;background:#5c5d65"></div>
<div class="th" style="left:295px;top:724px">Name</div>
<div class="th" style="left:434px;top:724px">Type</div>
<div class="th" style="left:565px;top:724px">Used</div>
<div class="th" style="left:699px;top:724px">Available</div>
<div class="th" style="left:856px;top:724px">Compression</div>
<div class="th" style="left:1039px;top:724px">Compression Ratio</div>
<div class="th" style="left:1277px;width:120px;text-align:center;top:724px;transform-origin:50% 0">Readonly</div>
<div class="th" style="left:1433px;top:724px">Dedup</div>
<div class="th" style="left:1577px;top:724px">Comments</div>
<svg class="a" style="left:295px;top:757px" width="8" height="11" viewBox="0 0 8 11"><path d="M1 1.5L5.5 5.5L1 9.5Z" fill="#9a9a9a"/></svg>
<div class="td" style="left:309px;top:757px">nas</div>
<div class="td" style="left:434px;top:757px">dataset</div>
<div class="td" style="left:565px;top:757px">4.1 TiB</div>
<div class="td" style="left:699px;top:757px">3.72 TiB</div>
<div class="td" style="left:856px;top:757px">lz4</div>
<div class="td" style="left:1039px;top:757px">1.05x</div>
<div class="td" style="left:1277px;width:120px;text-align:center;top:757px">false</div>
<div class="td" style="left:1433px;top:757px">off</div>
<div class="td" style="left:1577px;top:757px"></div>
<svg class="a" style="left:1747px;top:753px" width="24" height="24" viewBox="0 0 24 24"><path d="M12 8c1.1 0 2-.9 2-2s-.9-2-2-2-2 .9-2 2 .9 2 2 2zm0 2c-1.1 0-2 .9-2 2s.9 2 2 2 2-.9 2-2-.9-2-2-2zm0 6c-1.1 0-2 .9-2 2s.9 2 2 2 2-.9 2-2-.9-2-2-2z" fill="#fff"/></svg>

</body></html>
